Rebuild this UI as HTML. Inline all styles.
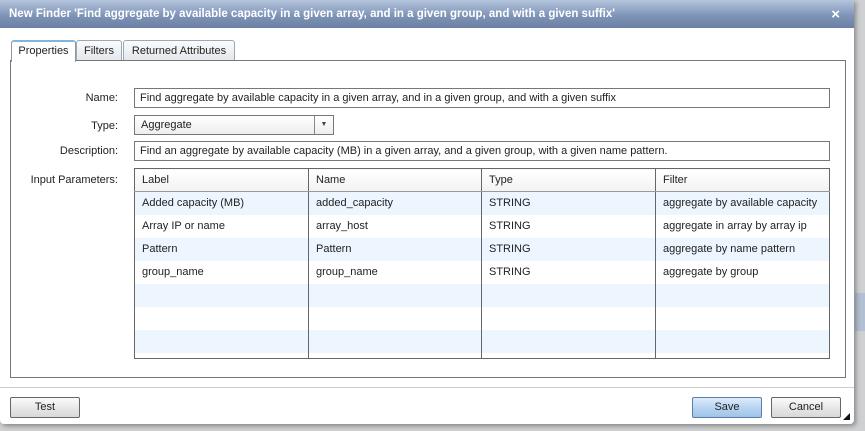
<!DOCTYPE html>
<html><head><style>
*{margin:0;padding:0;box-sizing:border-box}
body{width:865px;height:431px;background:#cfd0d2;font-family:"Liberation Sans",Tahoma,sans-serif;font-size:11px;color:#222;position:relative;overflow:hidden}
.dlg{position:absolute;left:0;top:0;width:854px;height:424px;background:#fff;border-radius:0 0 4px 4px;box-shadow:2px 2px 5px rgba(0,0,0,.35)}
.title{position:absolute;left:0;top:0;width:854px;height:28px;background:linear-gradient(#b4c4dc,#7f95b8 55%,#6a7fa3);color:#fff;font-weight:bold;font-size:11.5px;line-height:29px;padding-left:9px}
.x{position:absolute;right:14px;top:0;font-size:15px;font-weight:bold}
.a{position:absolute}
.panel{left:10px;top:60px;width:836px;height:318px;border:1px solid #777}
.tab{top:40px;height:21px;border:1px solid #9aa8b8;border-bottom:none;border-radius:3px 3px 0 0;background:linear-gradient(#fafbfc,#e2e6ea);line-height:20px;text-align:center}
.tab.on{background:#fff;height:22px;border-color:#8898aa;border-top:2px solid #7fb6e0;z-index:2;line-height:19px}
.lbl{text-align:right;width:110px;left:8px}
.inp{border:1px solid #777;height:20px;line-height:19px;padding-left:5px;background:#fff}
table{border-collapse:collapse;position:absolute;left:134px;top:168px;width:696px;border:1px solid #666}
td{height:23px;padding-left:7px;border-left:1px solid #666}
tr.h td{height:23px;border-bottom:1px solid #999;background:linear-gradient(#fff,#f2f2f2)}
tr.b td{background:#edf5ff}
.btn{top:397px;height:21px;width:70px;border:1px solid #666;border-radius:2px;background:linear-gradient(#fbfbfb,#e4e4e4 60%,#d9d9d9);text-align:center;line-height:19px;font-size:11px}
</style></head><body>
<div class="a" style="left:855px;top:293px;width:10px;height:38px;background:#b3bfd2"></div>
<div class="dlg">
<div class="title">New Finder 'Find aggregate by available capacity in a given array, and in a given group, and with a given suffix'<span class="x">×</span></div>
<div class="a tab on" style="left:11px;width:65px">Properties</div>
<div class="a tab" style="left:76px;width:46px">Filters</div>
<div class="a tab" style="left:123px;width:112px">Returned Attributes</div>
<div class="a panel"></div>
<div class="a lbl" style="top:92px">Name:</div>
<div class="a inp" style="left:134px;top:88px;width:696px">Find aggregate by available capacity in a given array, and in a given group, and with a given suffix</div>
<div class="a lbl" style="top:120px">Type:</div>
<div class="a inp" style="left:134px;top:115px;width:200px;background:linear-gradient(#fff,#eee);padding-left:6px">Aggregate<span style="position:absolute;left:179px;top:0;width:19px;height:18px;border-left:1px solid #888;text-align:center;font-size:7px;line-height:18px;color:#444">▼</span></div>
<div class="a lbl" style="top:145px">Description:</div>
<div class="a inp" style="left:134px;top:141px;width:696px">Find an aggregate by available capacity (MB) in a given array, and a given group, with a given name pattern.</div>
<div class="a lbl" style="top:174px">Input Parameters:</div>
<table>
<tr class="h"><td style="width:174px;border-left:none">Label</td><td style="width:173px">Name</td><td style="width:174px">Type</td><td>Filter</td></tr>
<tr class="b"><td style="border-left:none">Added capacity (MB)</td><td>added_capacity</td><td>STRING</td><td>aggregate by available capacity</td></tr>
<tr><td style="border-left:none">Array IP or name</td><td>array_host</td><td>STRING</td><td>aggregate in array by array ip</td></tr>
<tr class="b"><td style="border-left:none">Pattern</td><td>Pattern</td><td>STRING</td><td>aggregate by name pattern</td></tr>
<tr><td style="border-left:none">group_name</td><td>group_name</td><td>STRING</td><td>aggregate by group</td></tr>
<tr class="b"><td style="border-left:none"></td><td></td><td></td><td></td></tr>
<tr><td style="border-left:none"></td><td></td><td></td><td></td></tr>
<tr class="b"><td style="border-left:none"></td><td></td><td></td><td></td></tr>
<tr><td style="border-left:none;height:6px"></td><td style="height:6px"></td><td style="height:6px"></td><td style="height:6px"></td></tr>
</table>
<div class="a" style="left:0;top:387px;width:854px;height:1px;background:#ccc"></div>
<div class="a btn" style="left:10px">Test</div>
<div class="a btn" style="left:692px;background:linear-gradient(#dcebfa,#b6d3f0 55%,#9fc3e8);border-color:#5c7ea8">Save</div>
<div class="a btn" style="left:771px">Cancel</div>
<div class="a" style="left:843px;top:413px;width:0;height:0;border-left:7px solid transparent;border-bottom:7px solid #111"></div>
</div>
</body></html>
